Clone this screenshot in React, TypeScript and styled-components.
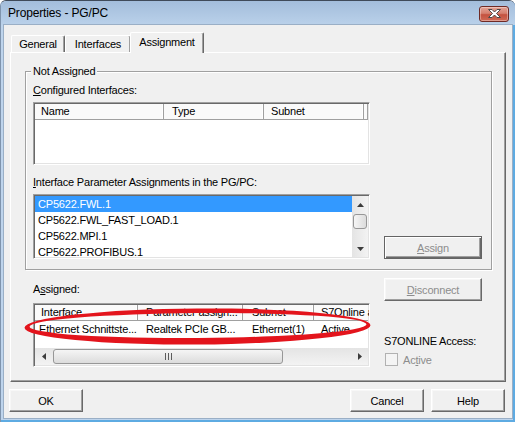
import React from 'react';
import styled, { createGlobalStyle } from 'styled-components';

const GlobalStyle = createGlobalStyle`
  html, body {
    margin: 0;
    padding: 0;
    background: #ffffff;
  }
  body {
    font-family: "Liberation Sans", Arial, sans-serif;
    font-size: 11px;
    letter-spacing: -0.2px;
    color: #000000;
  }
`;

interface Column {
  title: string;
  width: number;
  pad: number;
}

const configuredColumns: Column[] = [
  { title: 'Name', width: 129, pad: 6 },
  { title: 'Type', width: 100, pad: 8 },
  { title: 'Subnet', width: 100, pad: 7 },
];

const assignedColumns: Column[] = [
  { title: 'Interface', width: 103, pad: 6 },
  { title: 'Parameter assign...', width: 105, pad: 8 },
  { title: 'Subnet', width: 71, pad: 9 },
  { title: 'S7Online a', width: 60, pad: 7 },
];

const assignedRows = [
  ['Ethernet Schnittste...', 'Realtek PCIe GB...', 'Ethernet(1)', 'Active'],
];

const parameterSets = [
  'CP5622.FWL.1',
  'CP5622.FWL_FAST_LOAD.1',
  'CP5622.MPI.1',
  'CP5622.PROFIBUS.1',
];

const Arrow: React.FC<{ dir: 'up' | 'down' | 'left' | 'right' }> = ({ dir }) => {
  const points = {
    up: '0,4 3.5,0 7,4',
    down: '0,0 7,0 3.5,4',
    left: '4,0 4,7 0,3.5',
    right: '0,0 4,3.5 0,7',
  }[dir];
  const vertical = dir === 'up' || dir === 'down';
  return (
    <svg width={vertical ? 7 : 4} height={vertical ? 4 : 7} viewBox={vertical ? '0 0 7 4' : '0 0 4 7'}>
      <polygon points={points} fill="#3c3c3c" />
    </svg>
  );
};

const App: React.FC = () => {
  return (
    <>
      <GlobalStyle />
      <Window>
        <TitleBar>
          <TitleText>Properties - PG/PC</TitleText>
          <CloseButton>
            <svg width="13" height="9" viewBox="0 0 13 9">
              <polygon
                points="0.5,0.5 4,0.5 6.5,3 9,0.5 12.5,0.5 8.5,4.5 12.5,8.5 9,8.5 6.5,6 4,8.5 0.5,8.5 4.5,4.5"
                fill="#ffffff"
                stroke="#4a4a4a"
                strokeWidth="1"
                strokeLinejoin="round"
              />
            </svg>
          </CloseButton>
        </TitleBar>

        <Client>
          <TabStrip>
            <Tab $width={54}>General</Tab>
            <Tab $width={66}>Interfaces</Tab>
            <Tab $width={74} $active>Assignment</Tab>
          </TabStrip>

          <Panel>
            <GroupBox>
              <Legend>Not Assigned</Legend>
              <GroupGrid>
                <Column>
                  <Label><U>C</U>onfigured Interfaces:</Label>
                  <ListView $height={63} style={{ marginTop: 5 }}>
                    <Header>
                      {configuredColumns.map((col) => (
                        <HeaderCell key={col.title} $width={col.width} $pad={col.pad}>{col.title}</HeaderCell>
                      ))}
                      <HeaderFiller />
                    </Header>
                  </ListView>
                  <Label style={{ marginTop: 11 }}><U>I</U>nterface Parameter Assignments in the PG/PC:</Label>
                  <ListBox style={{ marginTop: 5 }}>
                    <Items>
                      {parameterSets.map((item, index) => (
                        <Item key={item} $selected={index === 0}>{item}</Item>
                      ))}
                    </Items>
                    <VScroll>
                      <ScrollArrow $vertical><Arrow dir="up" /></ScrollArrow>
                      <VTrack>
                        <VThumb />
                      </VTrack>
                      <ScrollArrow $vertical><Arrow dir="down" /></ScrollArrow>
                    </VScroll>
                  </ListBox>
                </Column>
                <SideColumn>
                  <PushButton $width={98} $default disabled>
                    <U>A</U>ssign
                  </PushButton>
                </SideColumn>
              </GroupGrid>
            </GroupBox>

            <AssignedGrid>
              <AssignedLabel>A<U>s</U>signed:</AssignedLabel>
              <PushButton $width={98} disabled>
                <U>D</U>isconnect
              </PushButton>
              <ListView $height={64}>
                <Header>
                  {assignedColumns.map((col) => (
                    <HeaderCell key={col.title} $width={col.width} $pad={col.pad}>{col.title}</HeaderCell>
                  ))}
                </Header>
                <Rows>
                  {assignedRows.map((row, r) => (
                    <Row key={r}>
                      {row.map((value, c) => (
                        <Cell
                          key={c}
                          $width={assignedColumns[c].width}
                          $pad={c === 0 ? 4 : assignedColumns[c].pad}
                        >
                          {value}
                        </Cell>
                      ))}
                    </Row>
                  ))}
                </Rows>
                <HScroll>
                  <ScrollArrow><Arrow dir="left" /></ScrollArrow>
                  <HTrack>
                    <HThumb>
                      <Grip>
                        <i /><i /><i />
                      </Grip>
                    </HThumb>
                  </HTrack>
                  <ScrollArrow><Arrow dir="right" /></ScrollArrow>
                </HScroll>
              </ListView>
              <AccessBox>
                <Label>S7ONLINE Access:</Label>
                <CheckRow>
                  <CheckBox />
                  <DisabledText>Ac<U>t</U>ive</DisabledText>
                </CheckRow>
              </AccessBox>
            </AssignedGrid>

            {/* red marker ring drawn around the assigned row */}
            <Marker viewBox="0 0 494 328">
              <path
                fillRule="evenodd"
                fill="#e3141c"
                transform="rotate(-0.4 186 273)"
                d="M13.5 273.5 a173 18 0 1 0 346 0 a173 18 0 1 0 -346 0 Z
                   M18.5 272.5 a168.5 12.5 0 1 0 337 0 a168.5 12.5 0 1 0 -337 0 Z"
              />
            </Marker>
          </Panel>

          <ButtonRow>
            <PushButton $width={74} style={{ marginLeft: -1 }}>OK</PushButton>
            <Spacer />
            <PushButton $width={74}>Cancel</PushButton>
            <PushButton $width={74} style={{ marginLeft: 7, marginRight: 1 }}>Help</PushButton>
          </ButtonRow>
        </Client>
      </Window>
    </>
  );
};

const Window = styled.div`
  width: 515px;
  height: 422px;
  box-sizing: border-box;
  display: flex;
  flex-direction: column;
  background: #bed4ec;
  border-top: 1px solid #3f4a59;
  border-left: 1px solid #7f94ad;
  border-radius: 6px 6px 0 0;
  overflow: hidden;
  box-shadow: inset -2px -2px 0 #5eabe2;
`;

const TitleBar = styled.div`
  height: 24px;
  flex-shrink: 0;
  display: flex;
  align-items: center;
  justify-content: space-between;
  padding: 0 6px 0 7px;
  background: linear-gradient(#a3bddb, #bad1ea);
`;

const TitleText = styled.span`
  font-size: 12px;
  letter-spacing: -0.15px;
  color: #000000;
`;

const CloseButton = styled.div`
  width: 30px;
  height: 16px;
  box-sizing: border-box;
  margin-top: 1px;
  display: flex;
  align-items: center;
  justify-content: center;
  border: 1px solid #6f2a25;
  border-radius: 3px;
  background: linear-gradient(#e3a396 0%, #d6806f 45%, #c4523f 55%, #d06a55 100%);
  box-shadow: inset 0 0 0 1px rgba(255, 255, 255, 0.35);
`;

const Client = styled.div`
  flex: 1;
  margin: 0 3px 4px 3px;
  box-sizing: border-box;
  padding: 7px 6px 0 6px;
  display: flex;
  flex-direction: column;
  background: #f0f0f0;
  box-shadow: 0 0 0 1px #9aafc6;
`;

const TabStrip = styled.div`
  height: 20px;
  display: flex;
  align-items: flex-end;
  padding-left: 1px;
`;

const Tab = styled.div<{ $width: number; $active?: boolean }>`
  width: ${(p) => p.$width}px;
  height: ${(p) => (p.$active ? 21 : 17)}px;
  box-sizing: border-box;
  margin-left: ${(p) => (p.$active ? -1 : 0)}px;
  margin-bottom: ${(p) => (p.$active ? -1 : 0)}px;
  position: relative;
  z-index: ${(p) => (p.$active ? 2 : 1)};
  text-align: center;
  line-height: ${(p) => (p.$active ? 18 : 16)}px;
  background: #f0f0f0;
  border-top: 1px solid #ffffff;
  border-left: 1px solid #ffffff;
  border-right: 1px solid #696969;
  border-radius: 2px 2px 0 0;
  box-shadow: inset -1px 0 0 #a0a0a0;
`;

const Panel = styled.div`
  position: relative;
  height: 330px;
  box-sizing: border-box;
  padding: 18px 13px 0 14px;
  border-top: 1px solid #ffffff;
  border-left: 1px solid #ffffff;
  border-right: 1px solid #696969;
  border-bottom: 1px solid #696969;
  box-shadow: inset -1px -1px 0 #a0a0a0;
`;

const GroupBox = styled.div`
  display: flex;
  flex-direction: column;
  border: 1px solid #a0a0a0;
  box-shadow: 1px 1px 0 #ffffff, inset 1px 1px 0 #ffffff;
`;

const Legend = styled.span`
  align-self: flex-start;
  height: 13px;
  line-height: 13px;
  margin: -7px 0 0 5px;
  padding: 0 2px;
  background: #f0f0f0;
`;

const GroupGrid = styled.div`
  display: grid;
  grid-template-columns: 337px 98px;
  column-gap: 14px;
  padding: 6px 0 10px 7px;
`;

const Column = styled.div`
  display: flex;
  flex-direction: column;
`;

const SideColumn = styled.div`
  display: flex;
  flex-direction: column;
  justify-content: flex-end;
`;

const Label = styled.div`
  height: 13px;
  line-height: 13px;
  white-space: nowrap;
`;

const U = styled.span`
  text-decoration: underline;
`;

const Sunken = styled.div`
  box-sizing: border-box;
  background: #ffffff;
  border: 1px solid;
  border-color: #a0a0a0 #ffffff #ffffff #a0a0a0;
  box-shadow: inset 1px 1px 0 #696969, inset -1px -1px 0 #e3e3e3;
  padding: 1px;
  overflow: hidden;
`;

const ListView = styled(Sunken)<{ $height: number }>`
  height: ${(p) => p.$height}px;
  display: flex;
  flex-direction: column;
`;

const Header = styled.div`
  height: 16px;
  flex-shrink: 0;
  display: flex;
  box-sizing: border-box;
  background: #fafafa;
  border-bottom: 1px solid #a0a0a0;
`;

const HeaderCell = styled.div<{ $width: number; $pad: number }>`
  width: ${(p) => p.$width}px;
  flex-shrink: 0;
  box-sizing: border-box;
  padding-left: ${(p) => p.$pad}px;
  line-height: 15px;
  white-space: nowrap;
  overflow: hidden;
  border-right: 1px solid #a0a0a0;
  box-shadow: inset -1px 0 0 #ffffff;
`;

const HeaderFiller = styled.div`
  width: 4px;
  border-right: 1px solid #a0a0a0;
`;

const Rows = styled.div`
  flex: 1;
`;

const Row = styled.div`
  display: flex;
  height: 16px;
`;

const Cell = styled.div<{ $width: number; $pad: number }>`
  width: ${(p) => p.$width}px;
  flex-shrink: 0;
  box-sizing: border-box;
  padding-left: ${(p) => p.$pad}px;
  line-height: 16px;
  white-space: nowrap;
  overflow: hidden;
`;

const ListBox = styled(Sunken)`
  height: 65px;
  display: flex;
`;

const Items = styled.div`
  flex: 1;
`;

const Item = styled.div<{ $selected?: boolean }>`
  height: 16px;
  line-height: 16px;
  padding-left: 3px;
  white-space: nowrap;
  background: ${(p) => (p.$selected ? '#3399ff' : 'transparent')};
  color: ${(p) => (p.$selected ? '#ffffff' : '#000000')};
`;

const VScroll = styled.div`
  width: 16px;
  display: flex;
  flex-direction: column;
  background: linear-gradient(90deg, #e4e4e4, #f3f3f3);
`;

const ScrollArrow = styled.div<{ $vertical?: boolean }>`
  width: ${(p) => (p.$vertical ? '16px' : '17px')};
  height: ${(p) => (p.$vertical ? '17px' : '100%')};
  flex-shrink: 0;
  display: flex;
  align-items: center;
  justify-content: center;
`;

const VTrack = styled.div`
  flex: 1;
  padding: 1px 0 0 1px;
`;

const VThumb = styled.div`
  width: 14px;
  height: 15px;
  box-sizing: border-box;
  border: 1px solid #979797;
  border-radius: 3px;
  background: linear-gradient(90deg, #f5f5f5, #dcdcdc);
`;

const HScroll = styled.div`
  height: 17px;
  flex-shrink: 0;
  display: flex;
  background: linear-gradient(#e4e4e4, #f3f3f3);
`;

const HTrack = styled.div`
  flex: 1;
  padding: 1px 0 0 1px;
`;

const HThumb = styled.div`
  width: 230px;
  height: 15px;
  box-sizing: border-box;
  border: 1px solid #979797;
  border-radius: 3px;
  background: linear-gradient(#f5f5f5, #dcdcdc);
  display: flex;
  align-items: center;
  justify-content: center;
`;

const Grip = styled.div`
  display: flex;
  gap: 2px;

  i {
    display: block;
    width: 1px;
    height: 7px;
    background: #5c5c5c;
  }
`;

const AssignedGrid = styled.div`
  display: grid;
  grid-template-columns: 337px 98px;
  grid-template-rows: 23px 64px;
  column-gap: 14px;
  row-gap: 2px;
  margin-top: 8px;
  padding-left: 8px;
`;

const AssignedLabel = styled(Label)`
  align-self: center;
`;

const AccessBox = styled.div`
  display: flex;
  flex-direction: column;
  justify-content: flex-end;
  padding-bottom: 1px;

  ${Label} {
    margin-bottom: 5px;
  }
`;

const CheckRow = styled.div`
  display: flex;
  align-items: center;
  height: 13px;
`;

const CheckBox = styled.span`
  width: 13px;
  height: 13px;
  box-sizing: border-box;
  margin-left: 1px;
  border: 1px solid #b1b1b1;
  background: #f4f4f4;
`;

const DisabledText = styled.span`
  margin-left: 5px;
  color: #8d8d8d;
`;

const PushButton = styled.button<{ $width: number; $default?: boolean }>`
  width: ${(p) => p.$width}px;
  height: 23px;
  box-sizing: border-box;
  padding: 0;
  font-family: inherit;
  font-size: 11px;
  letter-spacing: inherit;
  color: #000000;
  background: #f0f0f0;
  border: 1px solid;
  border-color: ${(p) => (p.$default ? '#646464' : '#ffffff #696969 #696969 #ffffff')};
  box-shadow: ${(p) =>
    p.$default
      ? 'inset 1px 1px 0 #ffffff, inset -1px -1px 0 #696969, inset -2px -2px 0 #a0a0a0'
      : 'inset -1px -1px 0 #a0a0a0, inset 1px 1px 0 #f7f7f7'};

  &:disabled {
    color: #8d8d8d;
  }
`;

const ButtonRow = styled.div`
  display: flex;
  margin-top: 7px;
`;

const Spacer = styled.div`
  flex: 1;
`;

const Marker = styled.svg`
  position: absolute;
  left: 0;
  top: 0;
  width: 494px;
  height: 328px;
  pointer-events: none;
`;

export default App;
